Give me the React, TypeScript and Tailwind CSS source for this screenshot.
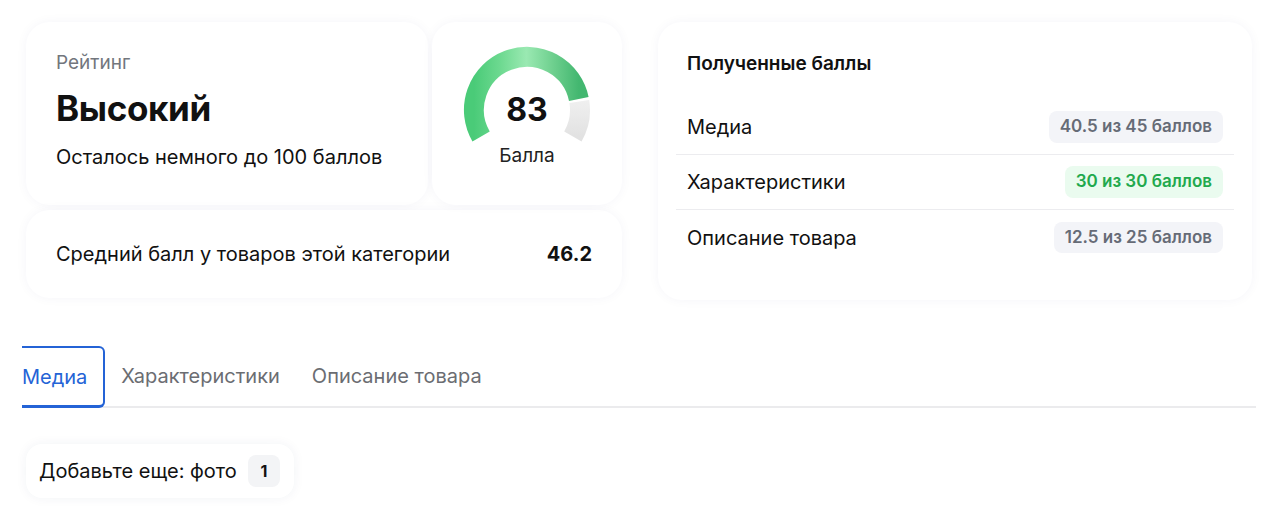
import React from "react";

const font = { fontFamily: "Inter, 'Noto Sans', sans-serif" };

const scores = [
  { label: "Медиа", value: "40.5 из 45 баллов", full: false },
  { label: "Характеристики", value: "30 из 30 баллов", full: true },
  { label: "Описание товара", value: "12.5 из 25 баллов", full: false },
];

const tabs = ["Медиа", "Характеристики", "Описание товара"];

function Gauge() {
  return (
    <svg width="130" height="100" viewBox="0 0 130 100" className="block">
      <defs>
        <linearGradient id="g" x1="0" y1="0" x2="1" y2="0">
          <stop offset="0%" stopColor="#4acb78" />
          <stop offset="25%" stopColor="#6dd990" />
          <stop offset="50%" stopColor="#9ae9b2" />
          <stop offset="75%" stopColor="#6fd08f" />
          <stop offset="100%" stopColor="#43b770" />
        </linearGradient>
        <linearGradient id="gr" x1="0" y1="0" x2="0" y2="1">
          <stop offset="0%" stopColor="#efefef" />
          <stop offset="100%" stopColor="#e2e2e2" />
        </linearGradient>
      </defs>
      <path d="M 19.1 91.5 A 53 53 0 1 1 116.8 54" fill="none" stroke="url(#g)" strokeWidth="20" />
      <path d="M 117.3 56.5 A 53 53 0 0 1 110.9 91.5" fill="none" stroke="url(#gr)" strokeWidth="20" />
    </svg>
  );
}

const card = "rounded-3xl bg-white shadow-[0_0_12px_rgba(30,50,110,0.045)]";

export default function App() {
  return (
    <div className="min-h-[515px] bg-white pl-[22px] pr-6 pt-[22px] text-[#111]" style={font}>
      <div className="grid grid-cols-[596px_594px] gap-9 pl-1">
        <div className="flex flex-col gap-[5px]">
          <div className="flex gap-1">
            <div className={"h-[183px] w-[402px] px-[30px] pt-[29px] " + card}>
              <div className="text-[19px] leading-6 text-[#72767d]">Рейтинг</div>
              <div className="mt-[13px] text-[35px] font-bold leading-10 tracking-[-0.01em]">Высокий</div>
              <div className="mt-[17px] text-[20px] leading-6">Осталось немного до 100 баллов</div>
            </div>
            <div className={"relative flex h-[183px] w-[190px] flex-col items-center pt-[23px] " + card}>
              <Gauge />
              <div className="absolute left-0 right-0 top-[68px] text-center text-[32px] font-bold leading-10">83</div>
              <div className="text-[19px] leading-[22px] text-[#222]">Балла</div>
            </div>
          </div>
          <div className={"flex h-[88px] items-center justify-between px-[30px] " + card}>
            <span className="text-[20px]">Средний балл у товаров этой категории</span>
            <span className="text-[20px] font-bold">46.2</span>
          </div>
        </div>
        <div className={"h-[278px] px-[18px] pt-[30px] " + card}>
          <div className="px-[11px] text-[19px] font-semibold leading-6">Полученные баллы</div>
          <div className="mt-[24px] flex flex-col">
            {scores.map((s, i) => (
              <div
                key={s.label}
                className={
                  "flex h-[55px] items-center justify-between px-[11px] " +
                  (i < scores.length - 1 ? "border-b border-[#ececef]" : "")
                }
              >
                <span className="text-[20px]">{s.label}</span>
                <span
                  className={
                    s.full
                      ? "rounded-lg bg-[#eafbef] px-[11px] py-[3px] text-[17px] font-semibold text-[#22a94d]"
                      : "rounded-lg bg-[#f3f4f8] px-[11px] py-[3px] text-[17px] font-semibold text-[#666b76]"
                  }
                >
                  {s.value}
                </span>
              </div>
            ))}
          </div>
        </div>
      </div>

      <div className="mt-[46px] flex w-[1234px] items-end border-b-2 border-[#ebebed]">
        {tabs.map((t, i) =>
          i === 0 ? (
            <div
              key={t}
              className="-mb-[2px] flex h-[62px] items-center rounded-r-md border-t-2 border-r-2 border-b-[3px] border-[#2463d6] pr-[16px] text-[20px] text-[#2463d6]"
            >
              {t}
            </div>
          ) : (
            <div key={t} className="flex h-[60px] items-center px-4 text-[20px] text-[#6b6d72]">
              {t}
            </div>
          )
        )}
      </div>

      <div className="mt-9 pl-1">
        <div className="inline-flex h-[54px] items-center gap-[11px] rounded-2xl bg-white pl-[13px] pr-[14px] shadow-[0_0_12px_rgba(30,50,110,0.06)]">
          <span className="text-[20px]">Добавьте еще: фото</span>
          <span className="flex h-[32px] w-[32px] items-center justify-center rounded-lg bg-[#f3f4f6] text-[16px] font-bold">1</span>
        </div>
      </div>
    </div>
  );
}
